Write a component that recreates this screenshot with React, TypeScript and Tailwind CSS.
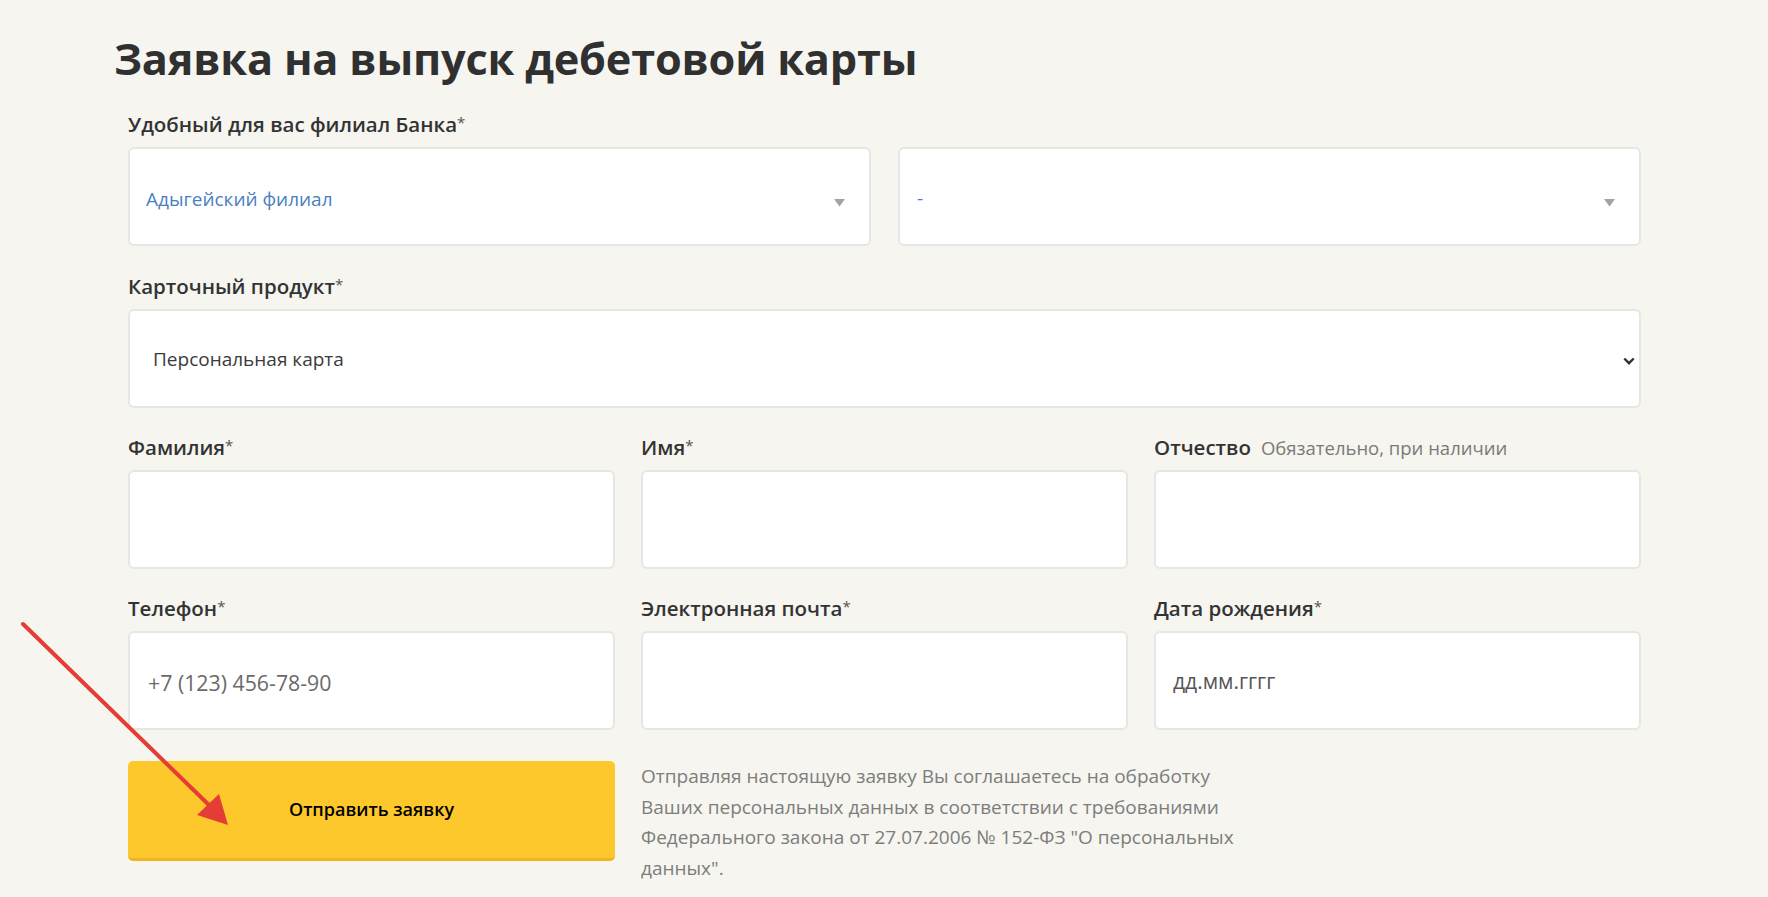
import React from "react";

const Req = () => (
  <span className="text-[15px] font-normal align-top relative top-[-2px] text-[#5a5148]">*</span>
);

function Label({ children, note }: { children: React.ReactNode; note?: string }) {
  return (
    <div className="h-[28px] leading-[28px] mb-[9px] text-[20.5px] font-semibold text-[#333333] whitespace-nowrap">
      {children}
      {note && (
        <span className="ml-[10px] text-[18.5px] font-normal text-[#7a7a7a]">{note}</span>
      )}
    </div>
  );
}

function Box({ children, className = "" }: { children?: React.ReactNode; className?: string }) {
  return (
    <div
      className={
        "h-[99px] bg-white border-2 border-[#e6e6e4] rounded-[6px] flex items-center relative " + className
      }
    >
      {children}
    </div>
  );
}

function Triangle() {
  return (
    <svg width="11" height="8" viewBox="0 0 11 8" className="absolute right-[24px] top-[50px]">
      <polygon points="0,0 11,0 5.5,7.5" fill="#a3a3a3" />
    </svg>
  );
}

export default function App() {
  return (
    <div
      className="min-h-screen bg-[#f6f5f0] relative overflow-hidden"
      style={{ fontFamily: '"Open Sans", "Noto Sans", sans-serif' }}
    >
      <div className="pl-[114px] pt-[33px] pb-[40px]">
        <h1 className="text-[43.3px] leading-[52px] font-bold text-[#303030] tracking-[-0.2px]">
          Заявка на выпуск дебетовой карты
        </h1>

        <div className="pl-[14px] w-[1527px] mt-[25px]">
          <Label>
            Удобный для вас филиал Банка<Req />
          </Label>
          <div className="grid grid-cols-2 gap-[27px]">
            <Box>
              <span className="pl-[16px] pt-[6px] text-[19px] text-[#4a7fc0]">Адыгейский филиал</span>
              <Triangle />
            </Box>
            <Box>
              <span className="pl-[17px] pt-[4px] text-[19px] text-[#4a7fc0]">-</span>
              <Triangle />
            </Box>
          </div>

          <div className="mt-[26px]">
            <Label>
              Карточный продукт<Req />
            </Label>
            <Box>
              <span className="pl-[23px] pt-[2px] text-[19px] text-[#3a3a3a]">Персональная карта</span>
              <svg
                width="12"
                height="8"
                viewBox="0 0 12 8"
                className="absolute right-[4px] top-[46px]"
              >
                <path d="M1.3 1.5 L6 6.2 L10.7 1.5" stroke="#333" strokeWidth="2.4" fill="none" />
              </svg>
            </Box>
          </div>

          <div className="grid grid-cols-3 gap-x-[26px] mt-[25px]">
            <div>
              <Label>
                Фамилия<Req />
              </Label>
              <Box />
            </div>
            <div>
              <Label>
                Имя<Req />
              </Label>
              <Box />
            </div>
            <div>
              <Label note="Обязательно, при наличии">Отчество</Label>
              <Box />
            </div>
          </div>

          <div className="grid grid-cols-3 gap-x-[26px] mt-[25px]">
            <div>
              <Label>
                Телефон<Req />
              </Label>
              <Box>
                <span className="pl-[18px] pt-[4px] text-[21.3px] text-[#6a6a6a]">+7 (123) 456-78-90</span>
              </Box>
            </div>
            <div>
              <Label>
                Электронная почта<Req />
              </Label>
              <Box />
            </div>
            <div>
              <Label>
                Дата рождения<Req />
              </Label>
              <Box>
                <span className="pl-[17px] pt-[2px] text-[21px] text-[#555555]">дд.мм.гггг</span>
              </Box>
            </div>
          </div>

          <div className="flex mt-[31px]">
            <button className="w-[487px] h-[100px] shrink-0 bg-[#fdc82c] border-b-[3px] border-[#f0b21e] rounded-[5px] text-[18px] font-semibold text-black">
              Отправить заявку
            </button>
            <p className="ml-[26px] w-[610px] text-[19px] leading-[30.7px] text-[#7d7d7d]">
              Отправляя настоящую заявку Вы соглашаетесь на обработку Ваших персональных данных в
              соответствии с требованиями Федерального закона от 27.07.2006 № 152-ФЗ "О персональных
              данных".
            </p>
          </div>
        </div>
      </div>

      <svg
        className="absolute left-0 top-0 pointer-events-none"
        width="1768"
        height="897"
        viewBox="0 0 1768 897"
      >
        <line x1="23" y1="624" x2="210" y2="806" stroke="#e53c35" strokeWidth="4" strokeLinecap="round" />
        <polygon points="228,825 197,815 219,794" fill="#e53c35" />
      </svg>
    </div>
  );
}
